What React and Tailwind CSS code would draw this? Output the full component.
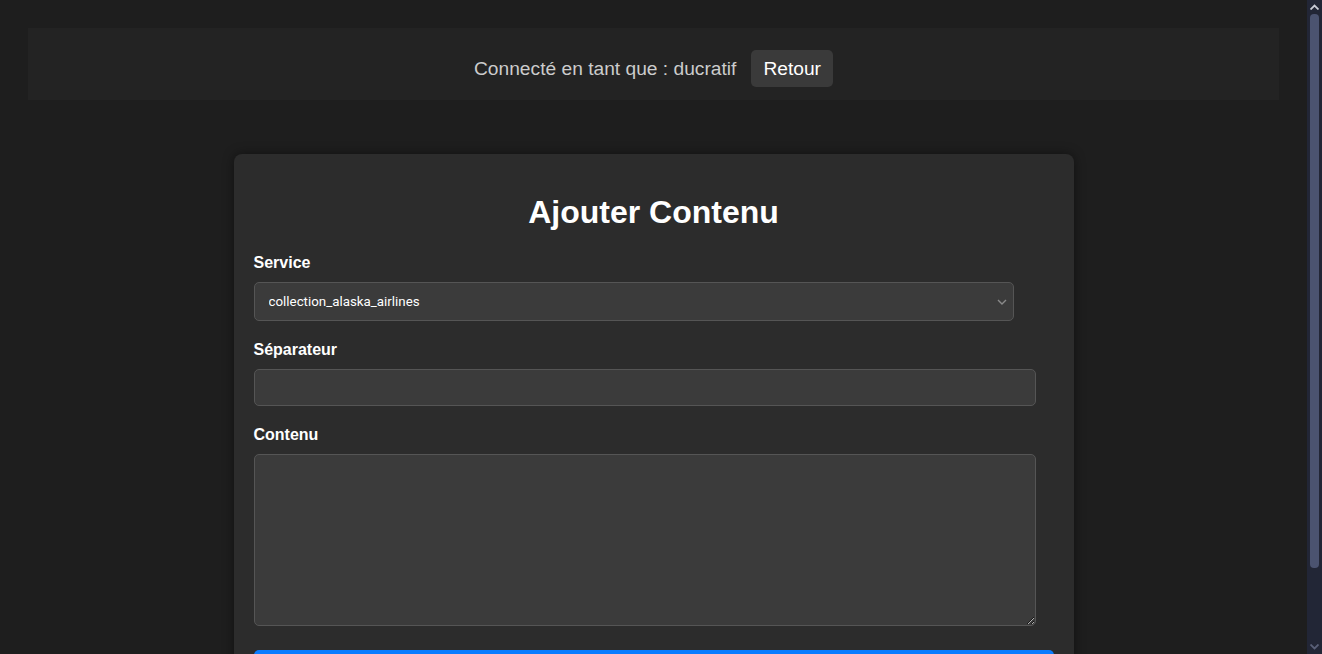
import React from "react";

function FakeScrollbar() {
  return (
    <div className="relative h-screen w-[15px] shrink-0 bg-[#222636]">
      <svg className="absolute left-[3px] top-[4px]" width="9" height="6" viewBox="0 0 9 6">
        <path d="M0.5 5.5L4.5 1.5L8.5 5.5" stroke="#c8cbd6" strokeWidth="1.8" fill="none" />
      </svg>
      <div className="absolute left-[3px] top-[14px] h-[554px] w-[9px] rounded-[4px] bg-[#4b5370]" />
      <svg className="absolute left-[3px] bottom-[4px]" width="9" height="6" viewBox="0 0 9 6">
        <path d="M0.5 0.5L4.5 4.5L8.5 0.5" stroke="#5a6078" strokeWidth="1.8" fill="none" />
      </svg>
    </div>
  );
}

export default function App() {
  return (
    <div
      className="flex h-screen overflow-hidden bg-[#1e1e1e] text-white"
      style={{ fontFamily: '"Liberation Sans", Arial, sans-serif' }}
    >
      <div className="h-screen flex-1 overflow-hidden">
        <div className="px-[28px] pt-[28px] pb-[40px]">
          <header className="flex items-center justify-center gap-[15px] bg-[#232323] pt-[22px] pb-[13px]">
            <span className="text-[19.2px] leading-[22px] text-[#cccccc]">
              Connecté en tant que : ducratif
            </span>
            <button className="rounded-[5px] bg-[#3a3a3a] px-[12px] py-[7.5px] text-[19.2px] leading-[22px] text-white">
              Retour
            </button>
          </header>

          <div className="mx-auto mt-[54px] w-[840px] rounded-[8px] bg-[#2c2c2c] px-[20px] pt-[40px] pb-[20px] shadow-[0_0_12px_rgba(0,0,0,0.45)]">
            <h1 className="text-center text-[32px] font-bold leading-[37px]">
              Ajouter Contenu
            </h1>

            <label className="mt-[23px] block text-[16px] font-bold leading-[18px]">
              Service
            </label>
            <div className="relative mt-[10px] w-[760px]">
              <select
                className="block h-[39px] w-full appearance-none rounded-[5px] border border-[#555555] bg-[#3b3b3b] pl-[14px] text-[13.33px] text-white outline-none"
                style={{ fontFamily: 'Roboto, "Liberation Sans", sans-serif' }}
                defaultValue="collection_alaska_airlines"
              >
                <option value="collection_alaska_airlines">collection_alaska_airlines</option>
              </select>
              <svg
                className="pointer-events-none absolute right-[7px] top-[17px]"
                width="10"
                height="6"
                viewBox="0 0 10 6"
                fill="none"
              >
                <path d="M1 1l4 4 4-4" stroke="#8a8a8a" strokeWidth="1.4" />
              </svg>
            </div>

            <label className="mt-[20px] block text-[16px] font-bold leading-[18px]">
              Séparateur
            </label>
            <input
              type="text"
              className="mt-[10px] block h-[37px] w-[782px] rounded-[5px] border border-[#555555] bg-[#3b3b3b] px-[10px] text-[14px] text-white outline-none"
            />

            <label className="mt-[20px] block text-[16px] font-bold leading-[18px]">
              Contenu
            </label>
            <textarea className="mt-[10px] block h-[172px] w-[782px] rounded-[5px] border border-[#555555] bg-[#3b3b3b] px-[10px] py-[8px] text-[14px] text-white outline-none" />

            <button className="mt-[24px] block h-[44px] w-full rounded-[5px] bg-[#0a7cff] text-[16px] font-bold text-white">
              Ajouter
            </button>
          </div>
        </div>
      </div>
      <FakeScrollbar />
    </div>
  );
}
